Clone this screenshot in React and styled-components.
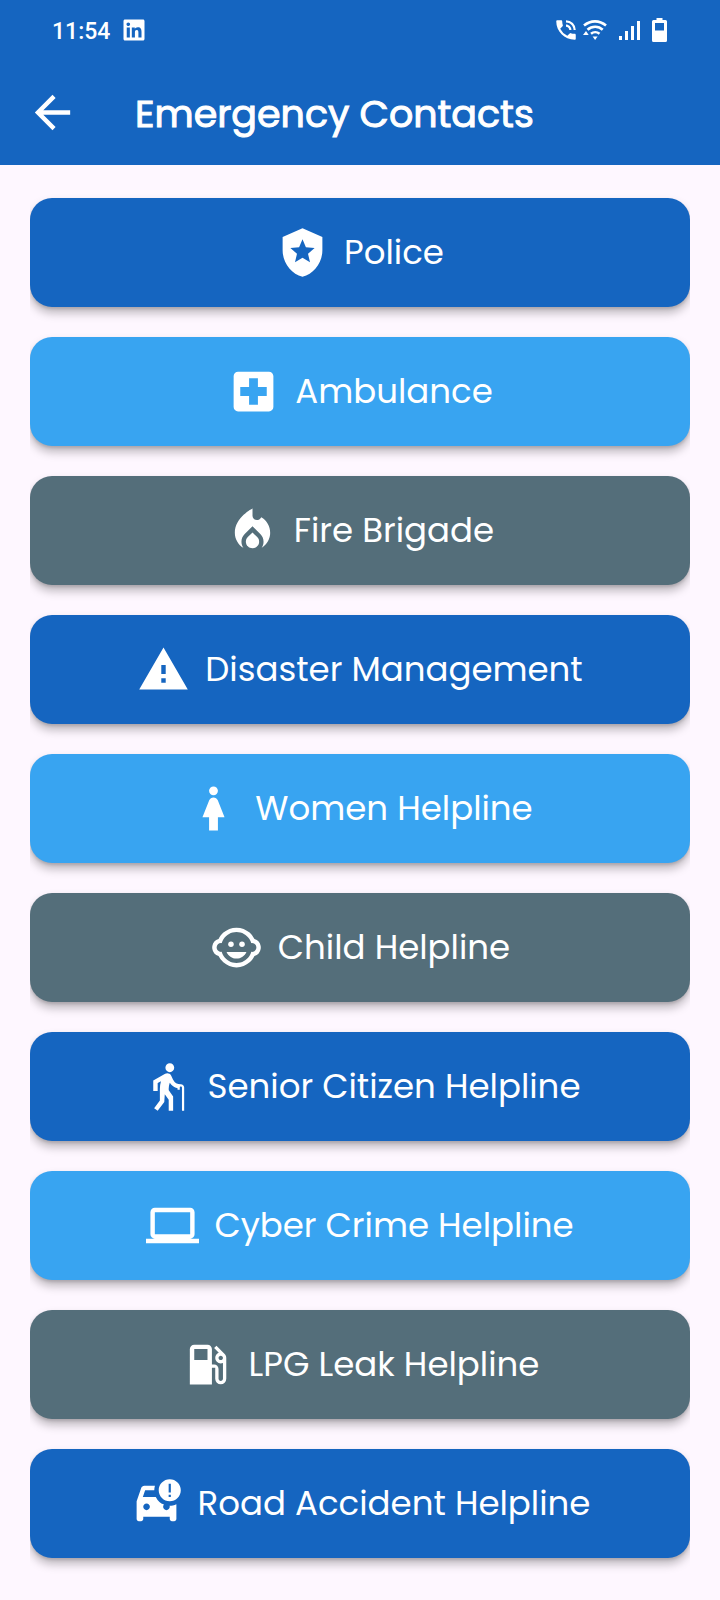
import React from "react";
import styled, { createGlobalStyle } from "styled-components";
import {
  MdArrowBack,
  MdCarCrash,
  MdChildCare,
  MdElderly,
  MdLaptop,
  MdLocalFireDepartment,
  MdLocalGasStation,
  MdLocalHospital,
  MdLocalPolice,
  MdPhoneInTalk,
  MdWarning,
  MdWoman,
} from "react-icons/md";
import { FaLinkedin } from "react-icons/fa";

const colors = {
  blue: "#1565c0",
  sky: "#38a4f1",
  slate: "#546e7a",
  page: "#fef7ff",
};

const GlobalStyle = createGlobalStyle`
  *, *::before, *::after { box-sizing: border-box; }
  body {
    margin: 0;
    background: ${colors.page};
    font-family: Poppins, Inter, sans-serif;
    color: #fff;
  }
  svg { display: block; flex: none; }
`;

const Header = styled.header`
  background: ${colors.blue};
`;

const StatusBar = styled.div`
  display: flex;
  align-items: center;
  justify-content: space-between;
  height: 60px;
  padding: 0 53px 0 52px;
`;

const StatusGroup = styled.div`
  display: flex;
  align-items: center;
  gap: ${(p) => p.$gap}px;
`;

const Clock = styled.time`
  padding-top: 3px;
  font: 500 23px/28px Roboto, sans-serif;
`;

const AppBar = styled.div`
  display: flex;
  align-items: center;
  gap: 56px;
  height: 105px;
  padding: 0 26px;
`;

const BackButton = styled.button`
  display: flex;
  padding: 0;
  border: 0;
  background: none;
  color: inherit;
  font-size: 53px;
  cursor: pointer;
`;

const Title = styled.h1`
  margin: 0;
  padding-top: 2px;
  font-size: 38px;
  line-height: 52px;
  font-weight: 400;
  -webkit-text-stroke: 1px #fff;
  white-space: nowrap;
`;

const ContactList = styled.main`
  display: flex;
  flex-direction: column;
  gap: 30px;
  margin: 0 30px;
  padding: 33px 0 42px;
  overflow-x: clip;
`;

const ContactButton = styled.button`
  display: flex;
  align-items: center;
  justify-content: center;
  gap: 15px;
  height: 109px;
  padding: 0 24px;
  border: 0;
  border-radius: 22px;
  background: ${(p) => colors[p.$tone]};
  box-shadow: 0 6px 10px rgba(0, 0, 0, 0.26), 0 2px 3px rgba(0, 0, 0, 0.12);
  color: inherit;
  font: inherit;
  font-size: 34px;
  line-height: 48px;
  white-space: nowrap;
  cursor: pointer;

  svg { font-size: 53px; }
`;

const ContactLabel = styled.span`
  padding-bottom: 2px;
`;

const contacts = [
  { label: "Police", tone: "blue", Icon: MdLocalPolice },
  { label: "Ambulance", tone: "sky", Icon: MdLocalHospital },
  { label: "Fire Brigade", tone: "slate", Icon: MdLocalFireDepartment },
  { label: "Disaster Management", tone: "blue", Icon: MdWarning },
  { label: "Women Helpline", tone: "sky", Icon: MdWoman },
  { label: "Child Helpline", tone: "slate", Icon: MdChildCare },
  { label: "Senior Citizen Helpline", tone: "blue", Icon: MdElderly },
  { label: "Cyber Crime Helpline", tone: "sky", Icon: MdLaptop },
  { label: "LPG Leak Helpline", tone: "slate", Icon: MdLocalGasStation },
  { label: "Road Accident Helpline", tone: "blue", Icon: MdCarCrash },
];

function WifiIcon() {
  return (
    <svg width="24" height="20" viewBox="0 0 24 20" fill="none" stroke="#fff" strokeWidth="2.6">
      <path d="M1 5.6C7.5 0 16.5 0 23 5.6" />
      <path d="M4.5 9.8C9 5.8 15.5 5.8 19.7 9.8" />
      <path d="M8 13.8c2.5-2.1 6-2.1 8.5 0" />
      <path d="M9.6 16.4h5L12.1 20z" fill="#fff" stroke="none" />
      <path d="M0 15L3 11l2.7 4z" fill="#fff" stroke="none" />
    </svg>
  );
}

function SignalIcon() {
  return (
    <svg width="21" height="20" viewBox="0 0 21 20" fill="#fff">
      <path d="M0 16h3v4H0zM6 11h3v9H6zM12 6h3v14h-3zM18 1h3v19h-3z" />
    </svg>
  );
}

function BatteryIcon() {
  return (
    <svg width="15" height="24" viewBox="0 0 15 24" fill="#fff" fillRule="evenodd">
      <path d="M4.5 0h6v2H13.5Q15 2 15 3.5V22.5Q15 24 13.5 24H1.5Q0 24 0 22.5V3.5Q0 2 1.5 2h3zM3 5v7.5h9V5z" />
    </svg>
  );
}

export default function App() {
  return (
    <>
      <GlobalStyle />
      <Header>
        <StatusBar>
          <StatusGroup $gap={12}>
            <Clock>11:54</Clock>
            <FaLinkedin size={24} />
          </StatusGroup>
          <StatusGroup $gap={12}>
            <StatusGroup $gap={4}>
              <MdPhoneInTalk size={26} />
              <WifiIcon />
            </StatusGroup>
            <SignalIcon />
            <BatteryIcon />
          </StatusGroup>
        </StatusBar>
        <AppBar>
          <BackButton type="button" aria-label="Back">
            <MdArrowBack />
          </BackButton>
          <Title>Emergency Contacts</Title>
        </AppBar>
      </Header>
      <ContactList>
        {contacts.map(({ label, tone, Icon }) => (
          <ContactButton key={label} type="button" $tone={tone}>
            <Icon aria-hidden="true" />
            <ContactLabel>{label}</ContactLabel>
          </ContactButton>
        ))}
      </ContactList>
    </>
  );
}
